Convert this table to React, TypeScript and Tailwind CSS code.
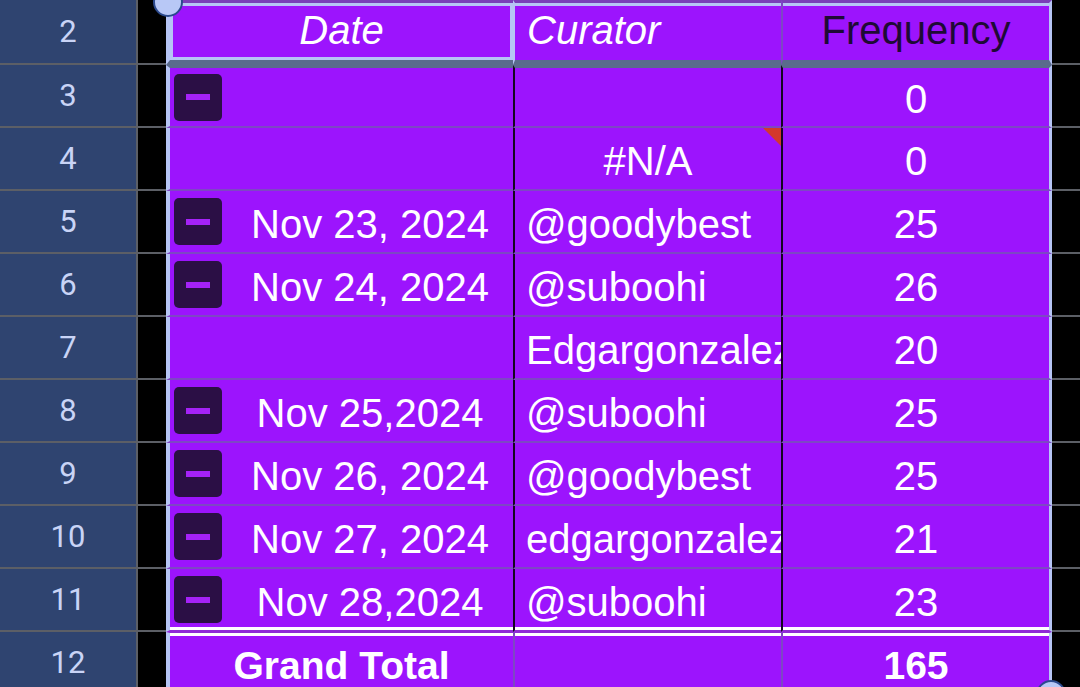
import React from 'react';

const rows = [
  { n: 3, btn: true, date: '', curator: '', freq: '0' },
  { n: 4, btn: false, date: '', curator: '#N/A', freq: '0', center: true, flag: true },
  { n: 5, btn: true, date: 'Nov 23, 2024', curator: '@goodybest', freq: '25' },
  { n: 6, btn: true, date: 'Nov 24, 2024', curator: '@suboohi', freq: '26' },
  { n: 7, btn: false, date: '', curator: 'Edgargonzalez', freq: '20' },
  { n: 8, btn: true, date: 'Nov 25,2024', curator: '@suboohi', freq: '25' },
  { n: 9, btn: true, date: 'Nov 26, 2024', curator: '@goodybest', freq: '25' },
  { n: 10, btn: true, date: 'Nov 27, 2024', curator: 'edgargonzalez', freq: '21' },
  { n: 11, btn: true, date: 'Nov 28,2024', curator: '@suboohi', freq: '23' },
];

const RowHead = ({ n }: { n: number }) => (
  <div className="w-[138px] shrink-0 bg-[#2f4470] border-r-2 border-b-2 border-[#5c5f66] flex items-center justify-center font-['Roboto',sans-serif] text-[31px] text-[#c9d4f6]">
    {n}
  </div>
);

const Gutter = () => <div className="w-[28px] shrink-0 bg-black border-b-2 border-[#5c5f66]" />;
const Rest = () => <div className="flex-1 bg-black border-b-2 border-[#5c5f66]" />;

const Collapse = () => (
  <div className="ml-[4px] w-[48px] h-[47px] shrink-0 rounded-[5px] bg-[#2b0f45] flex items-center justify-center">
    <div className="w-[24px] h-[6px] bg-[#a522f7]" />
  </div>
);

export default function App() {
  return (
    <div className="relative w-[1080px] h-[687px] overflow-hidden bg-black font-['Liberation_Sans',Arial,sans-serif] text-[40px] leading-[40px] text-white">
      {/* header row 2 */}
      <div className="flex h-[65px]">
        <RowHead n={2} />
        <Gutter />
        <div className="w-[347px] shrink-0 bg-[#9c14fd] border-l-4 border-l-[#b6c5f5] border-t-[3px] border-t-[#7a3fb8] border-b-[5px] border-b-[#5a6b8c] shadow-[inset_0_0_0_3px_#b6c5f5] flex items-center justify-center pb-1 italic">
          Date
        </div>
        <div className="w-[268px] shrink-0 bg-[#9c14fd] border-l-2 border-l-[#b6c5f5] border-t-[3px] border-t-[#7a3fb8] border-b-[5px] border-b-[#5a6b8c] shadow-[inset_0_3px_0_#b6c5f5] flex items-center pl-[12px] pb-1 italic">
          Curator
        </div>
        <div className="w-[271px] shrink-0 bg-[#9c14fd] border-l-2 border-l-[#7e47c4] border-r-[3px] border-r-[#b6c5f5] border-t-[3px] border-t-[#7a3fb8] border-b-[5px] border-b-[#5a6b8c] shadow-[inset_0_3px_0_#b6c5f5] flex items-center justify-center pb-1 text-[#1e0a35]">
          Frequency
        </div>
        <Rest />
      </div>

      {rows.map((r, i) => {
        const first = i === 0;
        const last = i === rows.length - 1;
        const edge = first
          ? 'border-t-[3px] border-t-[#5a6b8c] border-b-2 border-b-[#7e47c4]'
          : last
          ? 'border-b-2 border-b-[#8f2ad6] shadow-[inset_0_-3px_0_#ffffff]'
          : 'border-b-2 border-b-[#7e47c4]';
        return (
          <div key={r.n} className="flex h-[63px]">
            <RowHead n={r.n} />
            <Gutter />
            <div className={`w-[347px] shrink-0 bg-[#9c14fd] border-l-4 border-l-[#b6c5f5] flex items-center ${edge}`}>
              {r.btn && <Collapse />}
              <div className={`flex-1 text-center whitespace-nowrap pt-1 ${r.btn ? 'pl-[5px]' : ''}`}>{r.date}</div>
            </div>
            <div
              className={`relative w-[268px] shrink-0 bg-[#9c14fd] border-l-2 border-l-[#14061f] flex items-center overflow-hidden whitespace-nowrap pt-1 ${
                r.center ? 'justify-center' : 'pl-[11px]'
              } ${edge}`}
            >
              {r.curator}
              {r.flag && (
                <div className="absolute top-0 right-0 w-[18px] h-[18px] bg-[#d4382c] [clip-path:polygon(0_0,100%_0,100%_100%)]" />
              )}
            </div>
            <div className={`w-[271px] shrink-0 bg-[#9c14fd] border-l-2 border-l-[#14061f] border-r-[3px] border-r-[#b6c5f5] flex items-center justify-center pt-1 ${edge}`}>
              {r.freq}
            </div>
            <Rest />
          </div>
        );
      })}

      {/* grand total row 12 */}
      <div className="flex h-[63px]">
        <RowHead n={12} />
        <Gutter />
        <div className="w-[347px] shrink-0 bg-[#9c14fd] border-l-4 border-l-[#b6c5f5] border-t border-t-[#8f2ad6] shadow-[inset_0_3px_0_#ffffff] flex items-center justify-center pt-1 font-bold text-[39px]">
          Grand Total
        </div>
        <div className="w-[268px] shrink-0 bg-[#9c14fd] border-l-2 border-l-[#7e47c4] border-t border-t-[#8f2ad6] shadow-[inset_0_3px_0_#ffffff]" />
        <div className="w-[271px] shrink-0 bg-[#9c14fd] border-l-2 border-l-[#7e47c4] border-r-[3px] border-r-[#b6c5f5] border-t border-t-[#8f2ad6] shadow-[inset_0_3px_0_#ffffff] flex items-center justify-center pt-1 font-bold text-[39px]">
          165
        </div>
        <Rest />
      </div>

      {/* selection handles */}
      <div className="absolute left-[153px] top-[-13px] w-[30px] h-[30px] rounded-full bg-[#b8c8f6] border-2 border-[#2c4a8e]" />
      <div className="absolute left-[1036px] top-[680px] w-[30px] h-[30px] rounded-full bg-[#b8c8f6] border-2 border-[#2c4a8e]" />
    </div>
  );
}
